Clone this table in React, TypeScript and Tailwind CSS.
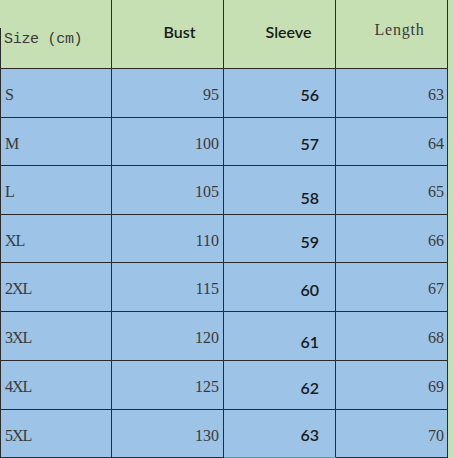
import React from "react";

const rows: { size: string; bust: number; sleeve: number; length: number; h: string; off: string }[] = [
  { size: "S", bust: 95, sleeve: 56, length: 63, h: "h-[49px]", off: "pt-[4px]" },
  { size: "M", bust: 100, sleeve: 57, length: 64, h: "h-[48px]", off: "pt-[4px]" },
  { size: "L", bust: 105, sleeve: 58, length: 65, h: "h-[49px]", off: "pt-[16px]" },
  { size: "XL", bust: 110, sleeve: 59, length: 66, h: "h-[48px]", off: "pt-[6px]" },
  { size: "2XL", bust: 115, sleeve: 60, length: 67, h: "h-[49px]", off: "pt-[6px]" },
  { size: "3XL", bust: 120, sleeve: 61, length: 68, h: "h-[49px]", off: "pt-[12px]" },
  { size: "4XL", bust: 125, sleeve: 62, length: 69, h: "h-[49px]", off: "pt-[6px]" },
  { size: "5XL", bust: 130, sleeve: 63, length: 70, h: "h-[48px]", off: "pt-[2px]" },
];

const serif = "font-['Liberation_Serif',serif] text-[16px] text-[#3a3a3a]";
const sans = "font-['Lato',sans-serif] font-semibold text-[16px] text-[#1a1a1a]";

export default function App() {
  return (
    <div className="w-[454px] h-[458px] bg-white overflow-hidden">
      <div className="flex">
        <div className="w-[448px] flex flex-col">
          {/* header */}
          <div className="flex h-[68px] bg-[#c6e0b4]">
            <div className="w-[112px] border-r border-[#2b2b2b] relative flex items-end pb-[17px] pl-[4px]">
              <div className="absolute left-0 top-[28px] bottom-0 w-px bg-[#2b2b2b]" />
              <span className="font-['Liberation_Mono',monospace] text-[15px] text-[#3a3a3a] tracking-[-0.3px]">Size (cm)</span>
            </div>
            <div className="w-[112px] border-r border-[#2b2b2b] flex items-center justify-center pb-[4px] pl-[24px]">
              <span className={sans}>Bust</span>
            </div>
            <div className="w-[112px] border-r border-[#2b2b2b] flex items-center justify-center pb-[4px] pl-[18px]">
              <span className={sans}>Sleeve</span>
            </div>
            <div className="w-[112px] border-r border-[#2b2b2b] flex items-center justify-center pb-[8px] pl-[16px]">
              <span className="font-['Liberation_Serif',serif] text-[16px] text-[#3a3a3a] tracking-[0.8px]">Length</span>
            </div>
          </div>
          {rows.map((r) => (
            <div key={r.size} className={`flex ${r.h} bg-[#9dc3e6] border-t border-[#2b2b2b]`}>
              <div className="w-[112px] border-l border-r border-[#2b2b2b] flex items-center pl-[4px] pt-[4px]">
                <span className={`${serif} tracking-[-1px]`}>{r.size}</span>
              </div>
              <div className="w-[112px] border-r border-[#2b2b2b] flex items-center justify-end pr-[4px] pt-[4px]">
                <span className={serif}>{r.bust}</span>
              </div>
              <div className={`w-[112px] border-r border-[#2b2b2b] flex items-center justify-end pr-[16px] ${r.off}`}>
                <span className={sans}>{r.sleeve}</span>
              </div>
              <div className="w-[112px] border-r border-[#2b2b2b] flex items-center justify-end pr-[3px] pt-[4px]">
                <span className={serif}>{r.length}</span>
              </div>
            </div>
          ))}
          <div className="flex h-px">
            <div className="w-[224px] bg-[#2b2b2b]" />
            <div className="w-[112px] bg-[#2fb56e]" />
            <div className="w-[112px] bg-[#2b2b2b]" />
          </div>
        </div>
        <div className="w-[6px] h-[458px] bg-[#c6e0b4]" />
      </div>
    </div>
  );
}
